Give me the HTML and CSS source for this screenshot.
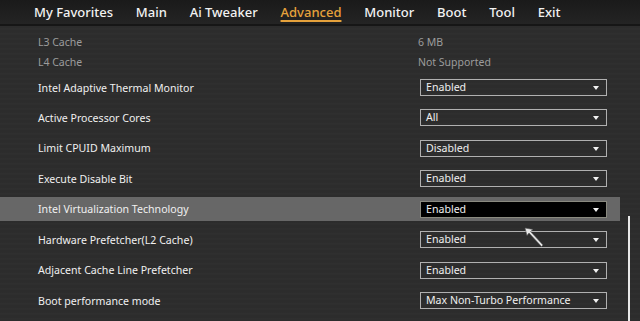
FILE: index.html
```html
<!DOCTYPE HTML>
<html lang="en-US">
	<head>
		<meta charset="UTF-8">
		<title>Advanced</title>
		<link rel="stylesheet" href="styles.css">
	</head>
	<body>
		<div class="menu">
			<span class="tab">My Favorites</span>
			<span class="tab">Main</span>
			<span class="tab">Ai Tweaker</span>
			<span class="tab active">Advanced</span>
			<span class="tab">Monitor</span>
			<span class="tab">Boot</span>
			<span class="tab">Tool</span>
			<span class="tab">Exit</span>
		</div>
		<div class="page">
			<div class="list">
				<div class="info">
					<span class="name">L3 Cache</span>
					<span class="value">6 MB</span>
				</div>
				<div class="info">
					<span class="name">L4 Cache</span>
					<span class="value">Not Supported</span>
				</div>
				<div class="setting">
					<span class="name">Intel Adaptive Thermal Monitor</span>
					<div class="select">Enabled<span class="arrow"></span></div>
				</div>
				<div class="setting">
					<span class="name">Active Processor Cores</span>
					<div class="select">All<span class="arrow"></span></div>
				</div>
				<div class="setting">
					<span class="name">Limit CPUID Maximum</span>
					<div class="select">Disabled<span class="arrow"></span></div>
				</div>
				<div class="setting">
					<span class="name">Execute Disable Bit</span>
					<div class="select">Enabled<span class="arrow"></span></div>
				</div>
				<div class="setting selected">
					<span class="name">Intel Virtualization Technology</span>
					<div class="select">Enabled<span class="arrow"></span></div>
				</div>
				<div class="setting">
					<span class="name">Hardware Prefetcher(L2 Cache)</span>
					<div class="select">Enabled<span class="arrow"></span></div>
				</div>
				<div class="setting">
					<span class="name">Adjacent Cache Line Prefetcher</span>
					<div class="select">Enabled<span class="arrow"></span></div>
				</div>
				<div class="setting">
					<span class="name">Boot performance mode</span>
					<div class="select">Max Non-Turbo Performance<span class="arrow"></span></div>
				</div>
			</div>
			<div class="scroll"><div class="thumb"></div></div>
		</div>
		<svg class="cursor" width="24" height="24" viewBox="0 0 24 24">
			<path d="M1 1 L9 2.5 L6.5 4.5 L19 18 L17.5 19.5 L5 6 L3 8.5 Z" fill="#e8e8e8" stroke="#555" stroke-width="0.6"/>
		</svg>
	</body>
</html>
```

FILE: styles.css
```css
body {
	margin: 0;
	width: 640px;
	height: 321px;
	overflow: hidden;
	background: #2d2d2d;
	font-family: "Noto Sans", "Open Sans", sans-serif;
	color: #f0f0f0;
	position: relative;
}
.menu {
	height: 24px;
	display: flex;
	align-items: center;
	padding-left: 34px;
	background: linear-gradient(#1a1a1a, #242424);
	border-bottom: 2px solid #161616;
	box-shadow: 0 1px 0 #3a3a3a;
	font-size: 13px;
	font-weight: 500;
}
.tab {
	margin-right: 22.8px;
	color: #f2f2f2;
	line-height: 24px;
}
.tab.active {
	color: #e6a23c;
	text-decoration: underline;
	text-decoration-thickness: 2px;
	text-underline-offset: 3px;
}
.page {
	display: flex;
	background: repeating-linear-gradient(0deg, #2c2c2c 0, #2c2c2c 2px, #303030 3px, #2b2b2b 5px);
}
.list {
	width: 620px;
	padding-top: 6px;
	height: 295px;
}
.info {
	height: 20px;
	display: flex;
	align-items: center;
	padding-left: 38px;
	font-size: 10.5px;
	color: #9c9c9c;
}
.info .name {
	width: 380px;
}
.info:nth-child(2) {
	margin-bottom: 3.5px;
}
.setting {
	height: 24px;
	margin-bottom: 6.45px;
	display: flex;
	align-items: center;
	padding-left: 38px;
	font-size: 10.6px;
}
.setting .name {
	width: 382px;
}
.select {
	width: 180px;
	height: 15px;
	border: 1.5px solid #b0b0b0;
	padding-left: 5px;
	display: flex;
	align-items: center;
	position: relative;
	line-height: 15px;
}
.arrow {
	position: absolute;
	right: 7px;
	top: 6px;
	border-left: 3.5px solid transparent;
	border-right: 3.5px solid transparent;
	border-top: 4px solid #f2f2f2;
}
.selected {
	background: #676767;
}
.selected .select {
	background: #000;
	border-color: #8a8a80;
}
.scroll {
	width: 20px;
	position: relative;
}
.thumb {
	position: absolute;
	left: 8px;
	top: 190px;
	width: 2px;
	height: 110px;
	background: #e8e8e8;
}
.cursor {
	position: absolute;
	left: 524px;
	top: 227px;
}
```
